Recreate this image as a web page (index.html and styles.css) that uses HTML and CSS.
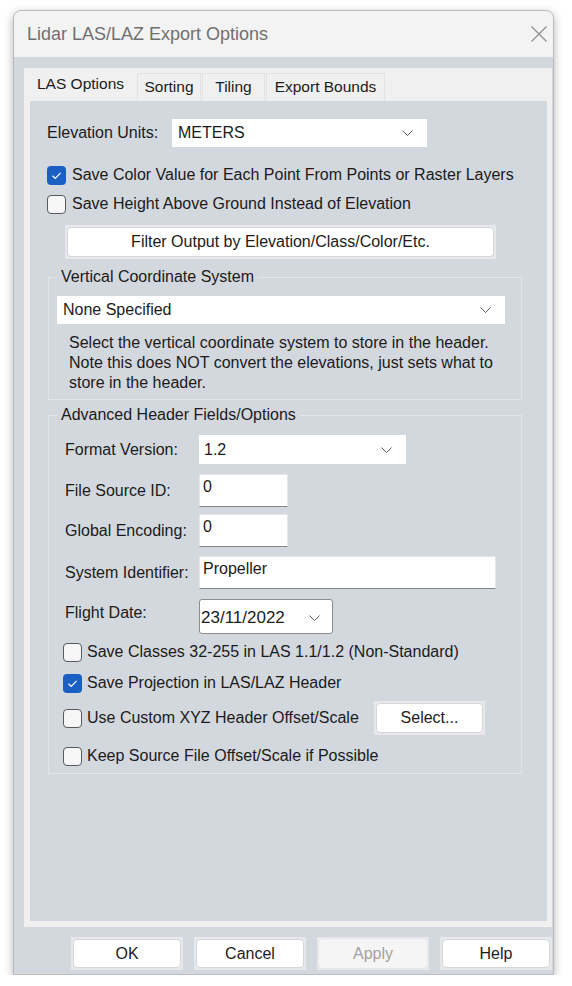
FILE: index.html
```html
<!DOCTYPE html>
<html lang="en">
<head>
    <meta charset="UTF-8">
    <meta name="viewport" content="width=device-width, initial-scale=1.0">
    <title>Lidar LAS/LAZ Export Options</title>
    <link rel="stylesheet" href="styles.css">
</head>
<body>
    <div class="window">
        <div class="titlebar">
            <span class="title">Lidar LAS/LAZ Export Options</span>
            <svg class="close" width="18" height="16" viewBox="0 0 18 16">
                <path d="M1.5 0.5L16.5 15.5M16.5 0.5L1.5 15.5" />
            </svg>
        </div>

        <div class="dialog-body">
            <div class="tabs">
                <div class="tab-row">
                    <div class="tab active">LAS Options</div>
                    <div class="tab tab-sorting">Sorting</div>
                    <div class="tab tab-tiling">Tiling</div>
                    <div class="tab tab-bounds">Export Bounds</div>
                </div>

                <div class="panel">
                    <div class="units-row">
                        <span class="label units-label">Elevation Units:</span>
                        <div class="combo units-combo">
                            <span>METERS</span>
                            <svg class="chevron" width="11" height="6" viewBox="0 0 11 6"><path d="M0.5 0.5L5.5 5.5L10.5 0.5" /></svg>
                        </div>
                    </div>

                    <div class="check check-top first">
                        <span class="box checked"><svg width="19" height="19" viewBox="0 0 19 19"><path d="M5.5 9.8L8.2 12.4L13.6 6.8" /></svg></span>
                        <span>Save Color Value for Each Point From Points or Raster Layers</span>
                    </div>
                    <div class="check check-top second">
                        <span class="box"></span>
                        <span>Save Height Above Ground Instead of Elevation</span>
                    </div>

                    <div class="btn-frame filter-frame">
                        <button class="btn">Filter Output by Elevation/Class/Color/Etc.</button>
                    </div>

                    <fieldset class="group vcs-group">
                        <legend>Vertical Coordinate System</legend>
                        <div class="combo vcs-combo">
                            <span>None Specified</span>
                            <svg class="chevron" width="11" height="6" viewBox="0 0 11 6"><path d="M0.5 0.5L5.5 5.5L10.5 0.5" /></svg>
                        </div>
                        <p class="note">Select the vertical coordinate system to store in the header. Note this does NOT convert the elevations, just sets what to store in the header.</p>
                    </fieldset>

                    <fieldset class="group adv-group">
                        <legend>Advanced Header Fields/Options</legend>

                        <div class="field-row">
                            <span class="label">Format Version:</span>
                            <div class="combo version-combo">
                                <span>1.2</span>
                                <svg class="chevron" width="11" height="6" viewBox="0 0 11 6"><path d="M0.5 0.5L5.5 5.5L10.5 0.5" /></svg>
                            </div>
                        </div>
                        <div class="field-row gap-10">
                            <span class="label">File Source ID:</span>
                            <div class="edit short">0</div>
                        </div>
                        <div class="field-row gap-7">
                            <span class="label">Global Encoding:</span>
                            <div class="edit short">0</div>
                        </div>
                        <div class="field-row gap-9">
                            <span class="label">System Identifier:</span>
                            <div class="edit long">Propeller</div>
                        </div>
                        <div class="field-row gap-10">
                            <span class="label date-label">Flight Date:</span>
                            <div class="date">
                                <span>23/11/2022</span>
                                <svg class="chevron" width="11" height="6" viewBox="0 0 11 6"><path d="M0.5 0.5L5.5 5.5L10.5 0.5" /></svg>
                            </div>
                        </div>

                        <div class="check check-adv row-a">
                            <span class="box"></span>
                            <span>Save Classes 32-255 in LAS 1.1/1.2 (Non-Standard)</span>
                        </div>
                        <div class="check check-adv row-b">
                            <span class="box checked"><svg width="19" height="19" viewBox="0 0 19 19"><path d="M5.5 9.8L8.2 12.4L13.6 6.8" /></svg></span>
                            <span>Save Projection in LAS/LAZ Header</span>
                        </div>
                        <div class="check check-adv row-c">
                            <span class="box"></span>
                            <span>Use Custom XYZ Header Offset/Scale</span>
                            <div class="btn-frame select-frame">
                                <button class="btn">Select...</button>
                            </div>
                        </div>
                        <div class="check check-adv row-d">
                            <span class="box"></span>
                            <span>Keep Source File Offset/Scale if Possible</span>
                        </div>
                    </fieldset>
                </div>
            </div>

            <div class="actions">
                <div class="btn-frame action-frame"><button class="btn">OK</button></div>
                <div class="btn-frame action-frame"><button class="btn">Cancel</button></div>
                <div class="btn-frame action-frame"><button class="btn disabled">Apply</button></div>
                <div class="btn-frame action-frame"><button class="btn">Help</button></div>
            </div>
        </div>
    </div>
</body>
</html>
```

FILE: styles.css
```css
body {
    font-family: "Liberation Sans", Arial, sans-serif;
    font-size: 16px;
    color: #1b1b1b;
    background-color: #fff;
    margin: 0;
    padding: 10px 0 0 13px;
}
.window {
    box-sizing: border-box;
    width: 541px;
    height: 965px;
    border: 1px solid #b9bbbf;
    border-radius: 8px 8px 0 0;
    background-color: #d3d7de;
    box-shadow: 0 3px 10px rgba(0, 0, 0, 0.3);
    overflow: hidden;
}
.titlebar {
    height: 46px;
    background-color: #f3f3f3;
    display: flex;
    align-items: center;
    justify-content: space-between;
    padding: 0 5px 0 13px;
}
.title {
    font-size: 18px;
    color: #707070;
}
.close path {
    stroke: #8c8c8c;
    stroke-width: 1.2;
    fill: none;
}
.dialog-body {
    padding: 11px 1px 0 10px;
}
.tabs {
    background-color: #f0f0f0;
}
.tab-row {
    display: flex;
    align-items: flex-end;
    height: 33px;
}
.tab {
    box-sizing: border-box;
    height: 28px;
    line-height: 26px;
    text-align: center;
    font-size: 15.5px;
    border: 1px solid #e2e2e2;
    border-bottom: none;
    margin-right: 1px;
}
.tab.active {
    width: 112px;
    height: 33px;
    line-height: 31px;
    padding-left: 1px;
    border: none;
}
.tab-sorting {
    width: 64px;
}
.tab-tiling {
    width: 63px;
}
.tab-bounds {
    width: 119px;
}
.panel {
    box-sizing: border-box;
    height: 826px;
    margin: 0 5px 0 6px;
    background-color: #d3d7de;
    padding: 18px 25px 0 17px;
    border-bottom: 6px solid #f0f0f0;
}
.units-row {
    display: flex;
    align-items: center;
}
.units-label {
    width: 125px;
}
.combo {
    box-sizing: border-box;
    height: 28px;
    background-color: #fff;
    display: flex;
    align-items: center;
    justify-content: space-between;
    padding: 0 14px 0 6px;
}
.chevron path {
    stroke: #5d5d5d;
    stroke-width: 1;
    fill: none;
}
.units-combo {
    width: 255px;
}
.check {
    display: flex;
    align-items: center;
    height: 20px;
}
.check-top {
    gap: 6px;
}
.check-top.first {
    margin-top: 18px;
}
.check-top.second {
    margin-top: 9px;
}
.box {
    box-sizing: border-box;
    width: 19px;
    height: 19px;
    border: 1px solid #5a5a5a;
    border-radius: 4px;
    background-color: #f6f6f6;
    flex: none;
}
.box.checked {
    border: none;
    background-color: #1c5fc2;
}
.box svg {
    display: block;
}
.box path {
    stroke: #fff;
    stroke-width: 1.2;
    fill: none;
}
.btn-frame {
    box-sizing: border-box;
    padding: 2px;
    background-color: #e6e8eb;
    display: flex;
}
.btn {
    flex: 1;
    font-family: inherit;
    font-size: 16px;
    color: #1b1b1b;
    background-color: #fff;
    border: 1px solid #d6d6d6;
    border-radius: 4px;
    padding: 0;
    cursor: pointer;
}
.btn.disabled {
    background-color: #f5f5f5;
    border-color: #f5f5f5;
    color: #a2a2a2;
}
.filter-frame {
    width: 431px;
    height: 34px;
    margin: 11px 0 0 18px;
}
.group {
    border: 1px solid #e3e5e9;
    margin: 8px 0 0 1px;
    padding: 9px 15px 6px 8px;
    width: 474px;
    box-sizing: border-box;
}
.group legend {
    line-height: 20px;
    padding: 0 4px;
}
.vcs-combo {
    width: 448px;
}
.note {
    margin: 9px 0 0 12px;
    line-height: 20px;
}
.adv-group {
    margin-top: 5px;
    padding: 10px 15px 7px 8px;
}
.field-row {
    display: flex;
    align-items: center;
    padding-left: 8px;
}
.field-row .label {
    width: 134px;
    flex: none;
}
.gap-7 {
    margin-top: 7px;
}
.gap-9 {
    margin-top: 9px;
}
.gap-10 {
    margin-top: 10px;
}
.version-combo {
    width: 207px;
    height: 29px;
    padding-left: 5px;
}
.edit {
    box-sizing: border-box;
    height: 33px;
    background-color: #fff;
    border: 1px solid #e6e6e6;
    border-bottom: 1px solid #868686;
    padding: 3px 0 0 3px;
}
.edit.short {
    width: 89px;
}
.edit.long {
    width: 297px;
}
.date-label {
    align-self: flex-start;
    padding-top: 5px;
}
.date {
    box-sizing: border-box;
    width: 134px;
    height: 35px;
    background-color: #fff;
    border: 1px solid #8d8d8d;
    border-radius: 3px;
    display: flex;
    align-items: center;
    justify-content: space-between;
    padding: 2px 12px 0 1px;
    font-size: 17px;
}
.check-adv {
    gap: 5px;
    padding-left: 6px;
}
.row-a {
    margin-top: 8px;
}
.row-b {
    margin-top: 11px;
}
.row-c {
    margin-top: 8px;
    height: 34px;
    width: 422px;
}
.row-d {
    margin-top: 11px;
}
.select-frame {
    width: 111px;
    height: 34px;
    margin-left: auto;
}
.actions {
    display: flex;
    gap: 11px;
    padding: 10px 0 5px 47px;
}
.action-frame {
    width: 112px;
    height: 33px;
}
```
